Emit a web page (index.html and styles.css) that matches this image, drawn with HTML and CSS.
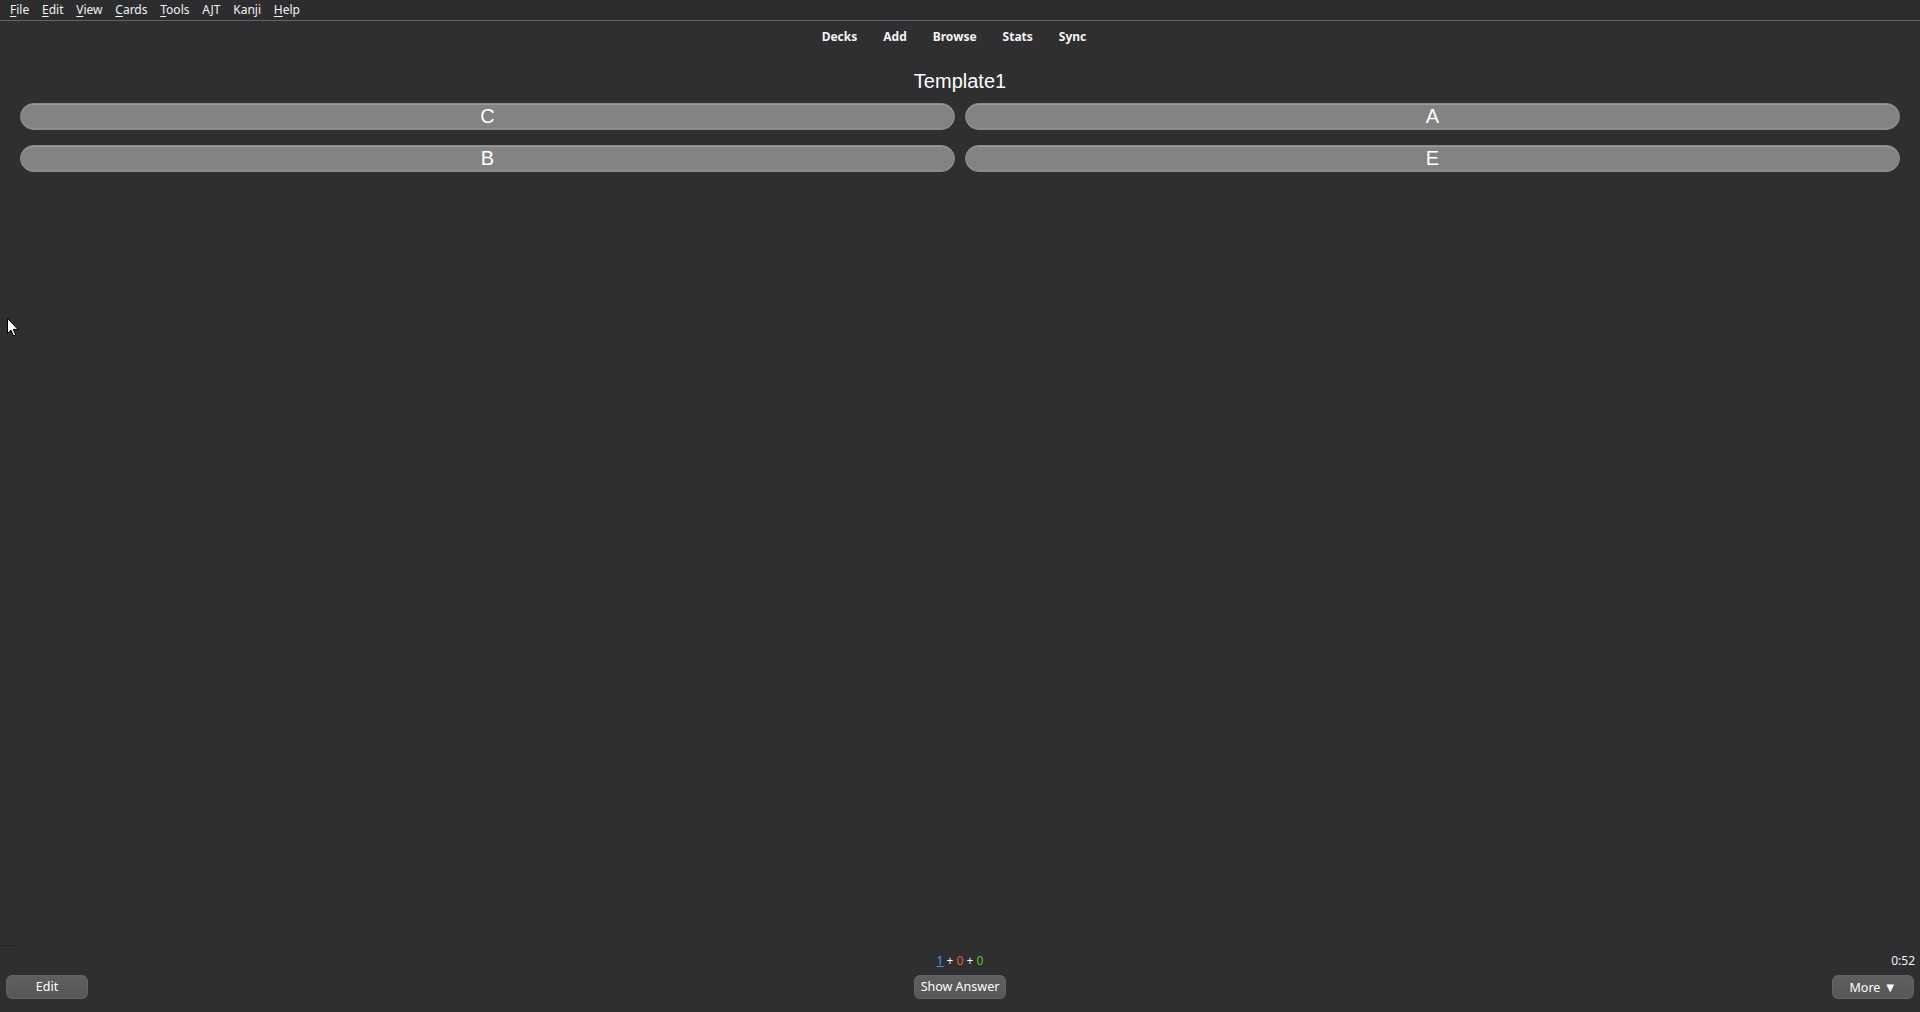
FILE: index.html
```html
<!DOCTYPE html>
<html lang="en">
<head>
<meta charset="utf-8">
<title>Anki</title>
<link rel="stylesheet" href="styles.css">
</head>
<body>
<div class="app">
  <nav class="menubar">
    <span class="menu-item"><u>F</u>ile</span>
    <span class="menu-item"><u>E</u>dit</span>
    <span class="menu-item"><u>V</u>iew</span>
    <span class="menu-item"><u>C</u>ards</span>
    <span class="menu-item"><u>T</u>ools</span>
    <span class="menu-item">AJT</span>
    <span class="menu-item">Kanji</span>
    <span class="menu-item"><u>H</u>elp</span>
  </nav>
  <header class="toolbar">
    <a class="tool-link">Decks</a>
    <a class="tool-link">Add</a>
    <a class="tool-link">Browse</a>
    <a class="tool-link">Stats</a>
    <a class="tool-link">Sync</a>
  </header>
  <main class="card">
    <div class="card-title">Template1</div>
    <div class="choices">
      <div class="choice">C</div>
      <div class="choice">A</div>
      <div class="choice">B</div>
      <div class="choice">E</div>
    </div>
  </main>
  <footer class="bottombar">
    <div class="edge-line"></div>
    <div class="bottom-side bottom-left">
      <button class="bb-btn btn-edit">Edit</button>
    </div>
    <div class="bottom-center">
      <div class="counts"><span class="c-new">1</span> + <span class="c-learn">0</span> + <span class="c-review">0</span></div>
      <button class="bb-btn btn-answer">Show Answer</button>
    </div>
    <div class="bottom-side bottom-right">
      <div class="timer">0:52</div>
      <button class="bb-btn btn-more">More <span class="tri">&#9660;</span></button>
    </div>
  </footer>
  <svg class="cursor" width="12" height="19" viewBox="0 0 12 19">
    <path d="M0.5 0.5 L0.5 15.5 L4 12.2 L6.6 18 L8.8 17 L6.3 11.4 L11 11.4 Z" fill="#ffffff" stroke="#000000" stroke-width="1"/>
  </svg>
</div>
</body>
</html>
```
FILE: styles.css
```css
* {
  box-sizing: border-box;
}

html, body {
  margin: 0;
  padding: 0;
  background: #2f2f31;
}

.app {
  position: relative;
  width: 1920px;
  height: 1012px;
  display: flex;
  flex-direction: column;
  background: #2f2f31;
  color: #ffffff;
  font-family: "Noto Sans", "Open Sans", sans-serif;
  overflow: hidden;
}

.menubar {
  height: 21px;
  flex: none;
  display: flex;
  align-items: center;
  padding: 0 0 1px 3px;
  background: #2d2d2f;
  border-bottom: 1px solid #646466;
  font-size: 12px;
  color: #f2f2f2;
}

.menu-item {
  padding: 0 6.4px;
  line-height: 19px;
}

.menu-item:first-child {
  padding-left: 7px;
}

.menu-item u {
  text-decoration-thickness: 1px;
  text-underline-offset: 2px;
}

.toolbar {
  height: 30px;
  flex: none;
  display: flex;
  justify-content: center;
  align-items: center;
  padding-right: 12px;
  font-size: 12px;
  font-weight: 700;
}

.tool-link {
  padding: 0 13px;
  color: #f4f4f4;
}

.card {
  flex: 1;
  display: flex;
  flex-direction: column;
  padding: 19px 20px 0;
  font-family: "Liberation Sans", Arial, sans-serif;
}

.card-title {
  text-align: center;
  font-size: 20px;
  line-height: 23px;
  color: #ffffff;
}

.choices {
  margin-top: 10px;
  display: grid;
  grid-template-columns: 1fr 1fr;
  column-gap: 10px;
  row-gap: 15px;
}

.choice {
  height: 27px;
  border-radius: 14px;
  background: #838383;
  border: 1px solid #8a8a8a;
  box-shadow: inset 0 1px 0 #9b9b9b, inset 0 -1px 0 #909090;
  color: #ffffff;
  font-size: 20px;
  line-height: 25px;
  text-align: center;
}

.bottombar {
  position: relative;
  height: 67px;
  flex: none;
  display: flex;
  align-items: flex-end;
  padding: 0 6px 13px;
  font-size: 12px;
}

.edge-line {
  position: absolute;
  left: 0;
  top: 0;
  width: 17px;
  height: 1px;
  background: #232325;
}

.bottom-side {
  flex: 1;
  display: flex;
  flex-direction: column;
}

.bottom-left {
  align-items: flex-start;
}

.bottom-right {
  align-items: flex-end;
}

.bottom-center {
  display: flex;
  flex-direction: column;
  align-items: center;
}

.counts,
.timer {
  height: 16px;
  line-height: 16px;
  margin-bottom: 6px;
  color: #f2f2f2;
}

.timer {
  margin-right: -1px;
}

.c-new {
  color: #4f99e8;
  text-decoration: underline;
}

.c-learn {
  color: #e0603c;
}

.c-review {
  color: #5cc22a;
}

.bb-btn {
  height: 24px;
  padding: 0;
  border-radius: 6px;
  border: 1px solid #646464;
  background: linear-gradient(#5f5f5f, #575757);
  color: #ffffff;
  font-family: "Noto Sans", "Open Sans", sans-serif;
  font-size: 12.5px;
  line-height: 22px;
}

.tri {
  font-size: 13px;
}

.btn-edit,
.btn-more {
  width: 82px;
}

.btn-answer {
  width: 92px;
}

.cursor {
  position: absolute;
  left: 7px;
  top: 318px;
}
```
